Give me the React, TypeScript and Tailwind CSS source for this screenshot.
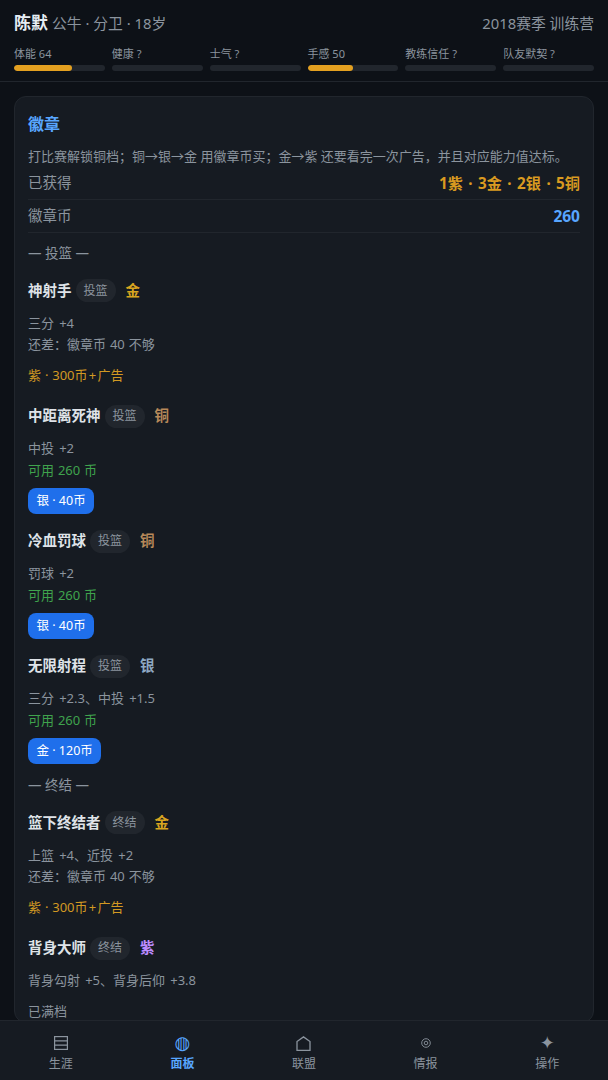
import type { ReactNode } from "react";

const stats = [
  { l: "体能 64", v: 64 },
  { l: "健康 ?", v: 0 },
  { l: "士气 ?", v: 0 },
  { l: "手感 50", v: 50 },
  { l: "教练信任 ?", v: 0 },
  { l: "队友默契 ?", v: 0 },
];

type B = { name: string; tag: string; rank: string; rc: string; desc: string; note?: string; nc?: string; up?: string; btn?: string; done?: string };

const sections: { title: string; items: B[] }[] = [
  {
    title: "— 投篮 —",
    items: [
      { name: "神射手", tag: "投篮", rank: "金", rc: "text-[#d9a520]", desc: "三分 \u200a+4", note: "还差：徽章币 40 不够", nc: "text-[#8b949e]", up: "紫 · 300币\u200a+\u200a广告" },
      { name: "中距离死神", tag: "投篮", rank: "铜", rc: "text-[#b88a5a]", desc: "中投 \u200a+2", note: "可用 260 币", nc: "text-[#3fa34d]", btn: "银 · 40币" },
      { name: "冷血罚球", tag: "投篮", rank: "铜", rc: "text-[#b88a5a]", desc: "罚球 \u200a+2", note: "可用 260 币", nc: "text-[#3fa34d]", btn: "银 · 40币" },
      { name: "无限射程", tag: "投篮", rank: "银", rc: "text-[#8fa9c4]", desc: "三分 \u200a+2.3、中投 \u200a+1.5", note: "可用 260 币", nc: "text-[#3fa34d]", btn: "金 · 120币" },
    ],
  },
  {
    title: "— 终结 —",
    items: [
      { name: "篮下终结者", tag: "终结", rank: "金", rc: "text-[#d9a520]", desc: "上篮 \u200a+4、近投 \u200a+2", note: "还差：徽章币 40 不够", nc: "text-[#8b949e]", up: "紫 · 300币\u200a+\u200a广告" },
      { name: "背身大师", tag: "终结", rank: "紫", rc: "text-[#bc8cff]", desc: "背身勾射 \u200a+5、背身后仰 \u200a+3.8", done: "已满档" },
    ],
  },
];

function Badge({ b }: { b: B }) {
  return (
    <div className={b.up ? "mb-[18px]" : "mb-[15px] last:mb-0"}>
      <div className="flex items-center h-[24px] mb-[10px]">
        <span className="text-[14.5px] font-bold text-[#dfe3e8]">{b.name}</span>
        <span className="ml-[4px] h-[23px] flex items-center px-[8px] rounded-full bg-[#21262d] text-[12px] text-[#8b949e]">{b.tag}</span>
        <span className={`ml-[10px] text-[14.5px] font-bold ${b.rc}`}>{b.rank}</span>
      </div>
      <div className="text-[13px] leading-[21.5px] [word-spacing:0.5px] text-[#8b949e]">{b.desc}</div>
      {b.note && <div className={`text-[13px] leading-[21.5px] [word-spacing:0.5px] ${b.nc}`}>{b.note}</div>}
      {b.up && <div className="mt-[9px] text-[13px] leading-[21.5px] [word-spacing:0.5px] text-[#d29922]">{b.up}</div>}
      {b.done && <div className="mt-[9px] text-[13px] leading-[21.5px] text-[#8b949e]">{b.done}</div>}
      {b.btn && (
        <button className="mt-[7px] block h-[26px] px-[8.5px] rounded-[8px] bg-[#1f6feb] text-white text-[12.5px]">{b.btn}</button>
      )}
    </div>
  );
}

const nav: { l: string; i: ReactNode; a?: boolean }[] = [
  {
    l: "生涯",
    i: (
      <svg width="14" height="14" viewBox="0 0 14 14" fill="none" stroke="currentColor" strokeWidth="1.2">
        <rect x="0.6" y="0.6" width="12.8" height="12.8" />
        <path d="M0.6 4.800h12.800M0.6 9.200h12.800" />
      </svg>
    ),
  },
  { l: "面板", i: "◍", a: true },
  {
    l: "联盟",
    i: (
      <svg width="15" height="15" viewBox="0 0 15 15" fill="none" stroke="currentColor" strokeWidth="1.3">
        <path d="M1 14.300V5.500L7.500 0.900 14 5.500v8.800z" />
      </svg>
    ),
  },
  {
    l: "情报",
    i: (
      <svg width="10" height="10" viewBox="0 0 10 10" fill="none" stroke="currentColor" strokeWidth="0.9">
        <circle cx="5" cy="5" r="4.300" />
        <circle cx="5" cy="5" r="1.800" />
      </svg>
    ),
  },
  { l: "操作", i: "✦" },
];

export default function App() {
  return (
    <div
      className="w-[608px] h-[1080px] flex flex-col overflow-hidden bg-[#0d1117]"
      style={{ fontFamily: '"Noto Sans", "Noto Sans CJK SC", sans-serif' }}
    >
      <header className="h-[82px] shrink-0 border-b border-[#21262d] px-[14px] pt-[11px]">
        <div className="flex items-center justify-between h-[24px]">
          <div className="flex items-baseline gap-[4px]">
            <span className="text-[17px] font-bold text-[#e6edf3]">陈默</span>
            <span className="text-[14.8px] text-[#8b949e]">公牛 · 分卫 · 18岁</span>
          </div>
          <span className="text-[14.8px] text-[#8b949e]">2018赛季 训练营</span>
        </div>
        <div className="grid grid-cols-6 gap-[7px] mt-[10px]">
          {stats.map((s) => (
            <div key={s.l}>
              <div className="text-[11px] leading-[17px] text-[#8b949e]">{s.l}</div>
              <div className="mt-[3px] h-[6px] rounded-full bg-[#21262d] overflow-hidden">
                <div className="h-full rounded-full bg-[#e3a020]" style={{ width: `${s.v}%` }} />
              </div>
            </div>
          ))}
        </div>
      </header>

      <main className="flex-1 min-h-0 overflow-hidden px-[14px] pt-[14px]">
        <div className="rounded-[12px] border border-[#21262d] bg-[#161b22] px-[13px] pt-[13px]">
          <h2 className="text-[16px] leading-[28px] font-bold text-[#58a6ff]">徽章</h2>
          <p className="mt-[8px] text-[13px] leading-[20.8px] text-[#8b949e]">打比赛解锁铜档；铜→银→金 用徽章币买；金→紫 还要看完一次广告，并且对应能力值达标。</p>
          <div className="flex items-center justify-between h-[33px] pt-[1px] border-b border-[#21262d]">
            <span className="text-[14.5px] text-[#8b949e]">已获得</span>
            <span className="text-[15.2px] font-bold [word-spacing:1.5px] text-[#d99a20]">1紫 · 3金 · 2银 · 5铜</span>
          </div>
          <div className="flex items-center justify-between h-[33px] pt-[1px] border-b border-[#21262d]">
            <span className="text-[14.5px] text-[#8b949e]">徽章币</span>
            <span className="text-[15.5px] font-bold text-[#58a6ff]">260</span>
          </div>
          {sections.map((s, i) => (
            <section key={s.title} className={i === 0 ? "mt-[10px]" : "mt-[10.5px]"}>
              <div className="text-[13.5px] leading-[21px] text-[#8b949e] mb-[15px]">{s.title}</div>
              {s.items.map((b) => (
                <Badge key={b.name} b={b} />
              ))}
            </section>
          ))}
        </div>
      </main>

      <nav className="h-[60px] shrink-0 grid grid-cols-5 border-t border-[#21262d] bg-[#161b22]">
        {nav.map((n) => (
          <div key={n.l} className={`flex flex-col items-center pt-[10px] ${n.a ? "text-[#58a6ff]" : "text-[#8b949e]"}`}>
            <div
              className="h-[24px] flex items-center justify-center text-[18px] leading-[24px]"
              style={{ fontFamily: '"DejaVu Sans", sans-serif' }}
            >
              {n.i}
            </div>
            <span className={`text-[12px] leading-[17px] ${n.a ? "font-bold" : ""}`}>{n.l}</span>
          </div>
        ))}
      </nav>
    </div>
  );
}
